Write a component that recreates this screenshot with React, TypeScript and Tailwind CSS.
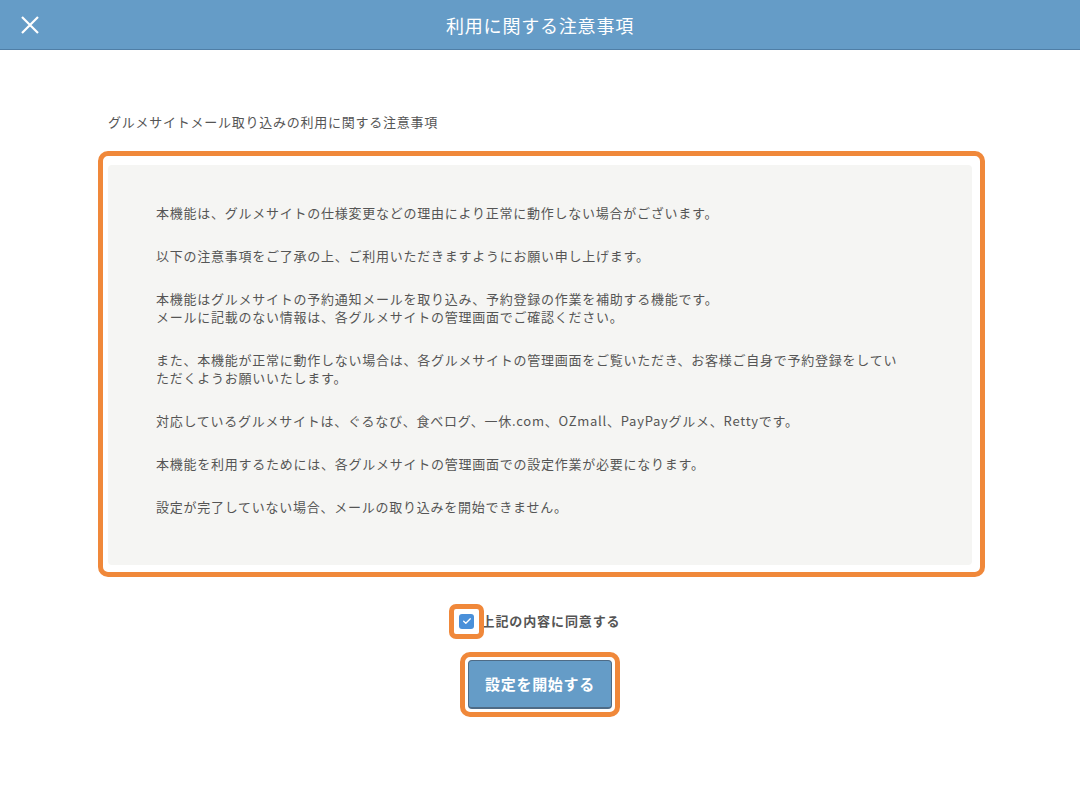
const paragraphs: string[][] = [
  ['本機能は、グルメサイトの仕様変更などの理由により正常に動作しない場合がございます。'],
  ['以下の注意事項をご了承の上、ご利用いただきますようにお願い申し上げます。'],
  [
    '本機能はグルメサイトの予約通知メールを取り込み、予約登録の作業を補助する機能です。',
    'メールに記載のない情報は、各グルメサイトの管理画面でご確認ください。',
  ],
  [
    'また、本機能が正常に動作しない場合は、各グルメサイトの管理画面をご覧いただき、お客様ご自身で予約登録をしていただくようお願いいたします。',
  ],
  ['対応しているグルメサイトは、ぐるなび、食べログ、一休.com、OZmall、PayPayグルメ、Rettyです。'],
  ['本機能を利用するためには、各グルメサイトの管理画面での設定作業が必要になります。'],
  ['設定が完了していない場合、メールの取り込みを開始できません。'],
];

export default function App() {
  return (
    <div
      className="min-h-screen bg-white text-[#555]"
      style={{ fontFamily: '"Noto Sans CJK JP", "Noto Sans", sans-serif' }}
    >
      {/* Header */}
      <header className="relative h-[50px] bg-[#659cc7] border-b border-[#4f7ea6] flex items-center justify-center">
        <button className="absolute left-[20px] top-[15px] w-[20px] h-[20px]" title="閉じる">
          <svg viewBox="0 0 20 20" className="w-[20px] h-[20px]" fill="none" stroke="white" strokeWidth={2.2}>
            <path d="M2 2l16 16M18 2L2 18" />
          </svg>
        </button>
        <h1 className="text-white text-[18px] tracking-[0.8px] leading-none">利用に関する注意事項</h1>
      </header>

      <main className="pt-[63px]">
        <p className="ml-[108px] text-[13px] leading-[18px] tracking-[0.75px]">
          グルメサイトメール取り込みの利用に関する注意事項
        </p>

        {/* Notes box */}
        <div className="ml-[98px] mt-[20px] w-[887px] rounded-[10px] border-[5px] border-[#f0883a] pt-[9px] pl-[5px] pr-[8px] pb-[7px]">
          <div className="rounded-[4px] bg-[#f5f5f3] pt-[39px] pb-[49px] pl-[48px]">
            <div className="w-[752px] flex flex-col gap-[25px] text-[13px] leading-[18px] tracking-[0.75px]">
              {paragraphs.map((lines, i) => (
                <div key={i}>
                  {lines.map((l, j) => (
                    <p key={j}>{l}</p>
                  ))}
                </div>
              ))}
            </div>
          </div>
        </div>

        {/* Agreement */}
        <div className="mt-[35px] flex items-center justify-center">
          <label className="flex items-center gap-[7px]">
            <span className="relative flex items-center justify-center w-[15px] h-[15px] rounded-[3px] bg-[#4a90d9]">
              <span className="absolute -inset-[10px] rounded-[7px] border-[5px] border-[#f0883a]" />
              <svg viewBox="0 0 12 12" className="w-[10px] h-[10px]" fill="none" stroke="white" strokeWidth={1.6}>
                <path d="M2 6.2l2.6 2.5L10 3.4" strokeLinecap="round" strokeLinejoin="round" />
              </svg>
            </span>
            <span className="text-[13px] font-bold leading-[18px] tracking-[0.9px] text-[#555]">上記の内容に同意する</span>
          </label>
        </div>

        <div className="mt-[22px] flex justify-center">
          <div className="rounded-[10px] border-[5px] border-[#f0883a] p-[3px]">
            <button className="w-[144px] h-[49px] rounded-[4px] bg-[#659cc7] border border-[#4e6b86] border-b-2 text-white text-[15px] font-bold tracking-[0.7px]">
              設定を開始する
            </button>
          </div>
        </div>
      </main>
    </div>
  );
}
